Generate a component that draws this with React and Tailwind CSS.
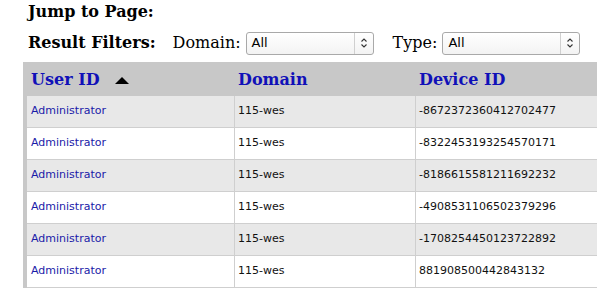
import React from "react";

const rows = [
  "-8672372360412702477",
  "-8322453193254570171",
  "-8186615581211692232",
  "-4908531106502379296",
  "-1708254450123722892",
  "881908500442843132",
];

function Select() {
  return (
    <div className="flex h-[23px] items-center rounded-[3px] border border-[#a9a9a9] bg-gradient-to-b from-white to-[#f3f3f3] font-['DejaVu_Sans',sans-serif] text-[13px] text-black">
      <span className="flex-1 pl-[5px]">All</span>
      <span className="flex h-full w-[19px] items-center justify-center border-l border-[#d0d0d0]">
        <svg width="8" height="12" viewBox="0 0 8 12" fill="none" stroke="#333" strokeWidth="1.1">
          <path d="M1.5 4.5 L4 2 L6.5 4.5" />
          <path d="M1.5 7.5 L4 10 L6.5 7.5" />
        </svg>
      </span>
    </div>
  );
}

export default function App() {
  return (
    <div className="h-[288px] w-[597px] overflow-hidden bg-white font-['DejaVu_Serif',serif]">
      <div className="pl-[28px] pt-[1px] text-[16px] font-bold leading-[22px] text-black">Jump to Page:</div>
      <div className="mt-[8px] flex items-center pl-[28px]">
        <span className="text-[16px] font-bold text-black">Result Filters:</span>
        <span className="ml-[17px] text-[16px] text-black">Domain:</span>
        <div className="ml-[5px] w-[128px]"><Select /></div>
        <span className="ml-[19px] text-[16px] text-black">Type:</span>
        <div className="ml-[5px] w-[138px]"><Select /></div>
      </div>
      <div className="ml-[23px] mt-[7px] w-[600px] border-l-4 border-[#c8c8c8]">
        <div className="flex h-[34px] items-center bg-[#c8c8c8] pt-[2px] text-[16px] font-bold text-[#1010b8]">
          <div className="flex w-[207px] items-center pl-[4px]">
            <span>User ID</span>
            <svg className="ml-[15px]" width="14" height="7" viewBox="0 0 14 7"><path d="M7 0 L14 7 L0 7 Z" fill="#000" /></svg>
          </div>
          <div className="w-[181px] pl-[4px]">Domain</div>
          <div className="flex-1 pl-[4px]">Device ID</div>
        </div>
        {rows.map((id, i) => (
          <div
            key={id}
            className={`flex h-[32px] items-center border-b border-[#cfcfcf] font-['DejaVu_Sans',sans-serif] text-[11px] ${i % 2 === 0 ? "bg-[#e8e8e8]" : "bg-white"}`}
          >
            <div className="flex h-full w-[207px] items-center pl-[4px] text-[#1a1aa8]">Administrator</div>
            <div className="flex h-full w-[181px] items-center border-l border-[#cfcfcf] pl-[3px] text-[#111]">115-wes</div>
            <div className="flex h-full flex-1 items-center border-l border-[#cfcfcf] pl-[3px] text-[#111]">{id}</div>
          </div>
        ))}
      </div>
    </div>
  );
}
